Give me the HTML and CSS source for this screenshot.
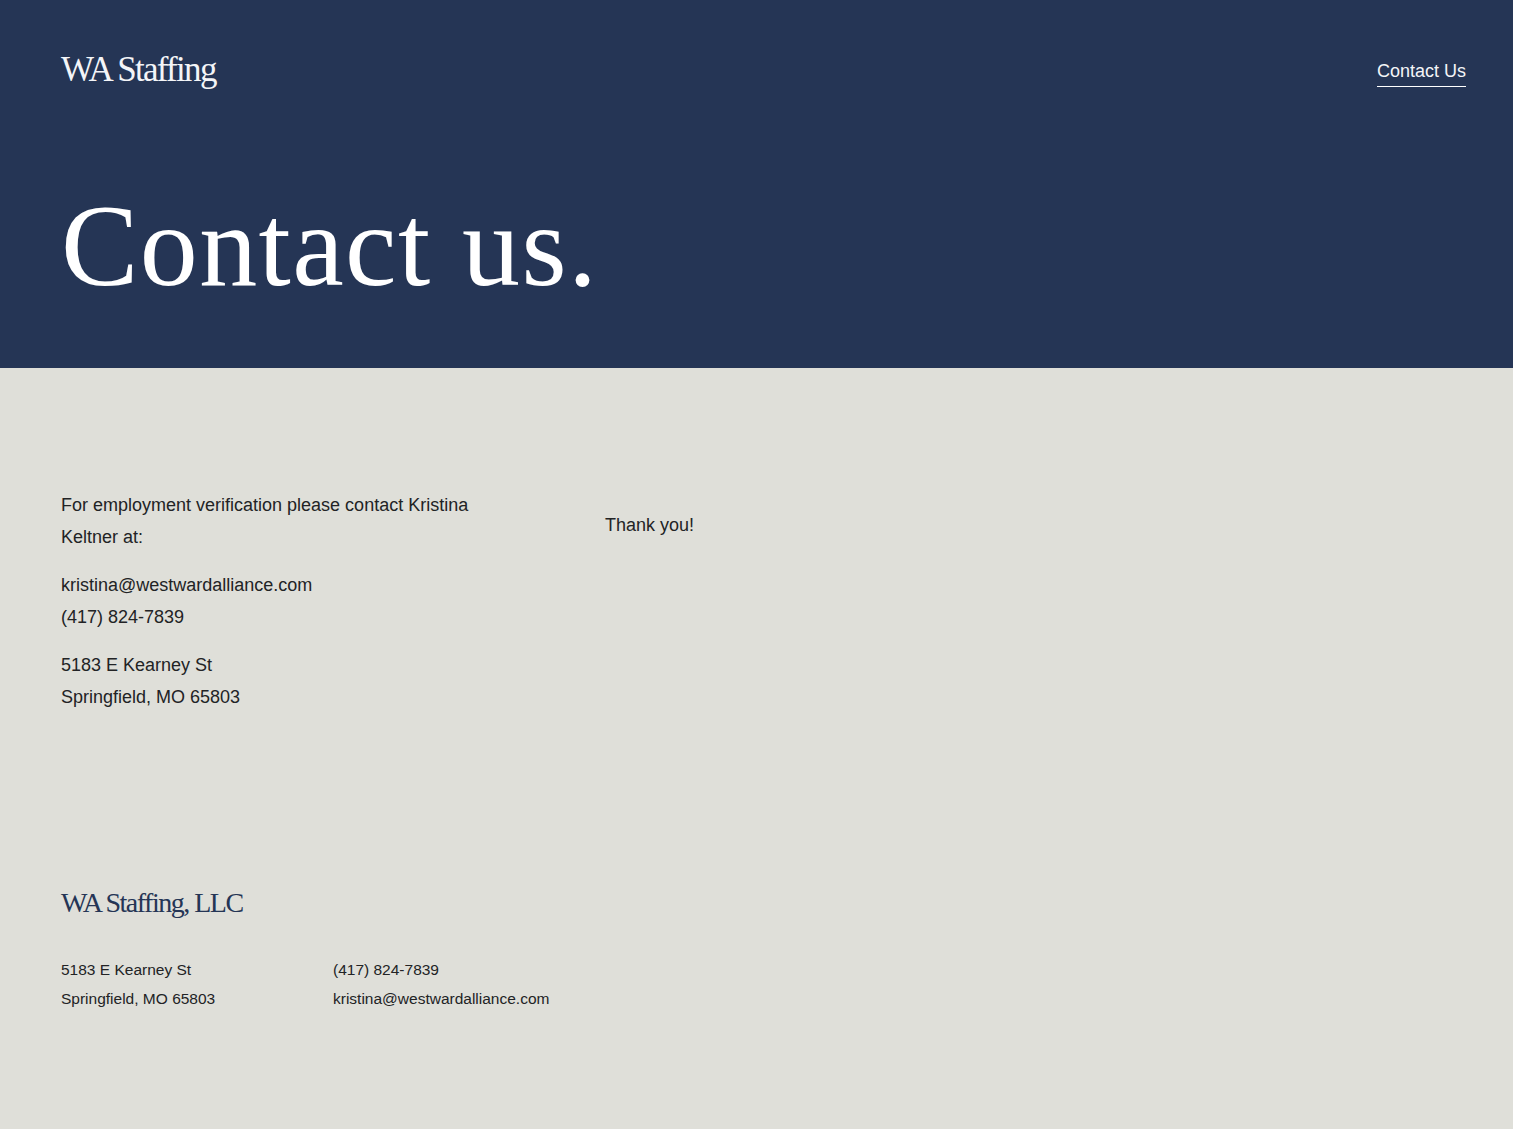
FILE: index.html
```html
<!DOCTYPE html>
<html lang="en">
<head>
<meta charset="utf-8">
<title>Contact us — WA Staffing</title>
<link rel="stylesheet" href="styles.css">
</head>
<body>
<header class="hero">
  <div class="topbar">
    <a class="logo" href="#">WA Staffing</a>
    <nav class="nav"><a class="nav-link" href="#">Contact Us</a></nav>
  </div>
  <h1 class="hero-title">Contact us.</h1>
</header>
<main class="content">
  <div class="info-col">
    <p>For employment verification please contact Kristina Keltner at:</p>
    <p>kristina@westwardalliance.com<br>(417) 824-7839</p>
    <p>5183 E Kearney St<br>Springfield, MO 65803</p>
  </div>
  <div class="thanks-col">
    <p>Thank you!</p>
  </div>
</main>
<footer class="footer">
  <div class="footer-logo">WA Staffing, LLC</div>
  <div class="footer-cols">
    <div class="footer-col">5183 E Kearney St<br>Springfield, MO 65803</div>
    <div class="footer-col">(417) 824-7839<br>kristina@westwardalliance.com</div>
  </div>
</footer>
</body>
</html>
```
FILE: styles.css
```css
html, body {
  margin: 0;
  padding: 0;
  background: #dfdfd9;
}
body {
  font-family: "Liberation Sans", Arial, sans-serif;
  color: #222325;
}
a { color: inherit; text-decoration: none; }

.hero {
  background: #253555;
  color: #ffffff;
  height: 368px;
  box-sizing: border-box;
  padding: 48px 47px 0 61px;
}
.topbar {
  display: flex;
  justify-content: space-between;
  align-items: center;
}
.logo {
  font-family: "Liberation Serif", "Times New Roman", serif;
  font-size: 35px;
  letter-spacing: -1.7px;
  line-height: 44px;
  color: #f4f5f8;
}
.nav-link {
  font-size: 18px;
  line-height: 24px;
  color: #f4f5f8;
  border-bottom: 1.5px solid #ffffff;
  padding-bottom: 5px;
  position: relative;
  top: 1px;
}
.hero-title {
  margin: 96px 0 0;
  font-family: "Liberation Serif", "Times New Roman", serif;
  font-weight: normal;
  font-size: 116px;
  line-height: 1;
  letter-spacing: 1.4px;
  color: #ffffff;
}

.content {
  display: grid;
  grid-template-columns: 544px 1fr;
  padding: 121px 47px 0 61px;
  font-size: 18px;
  line-height: 32px;
}
.content p { margin: 0 0 16px; }
.info-col { max-width: 430px; }
.thanks-col { padding-top: 20px; }

.footer {
  padding: 157px 47px 120px 61px;
}
.footer-logo {
  font-family: "Liberation Serif", "Times New Roman", serif;
  font-size: 28px;
  line-height: 34px;
  letter-spacing: -1.5px;
  color: #253555;
}
.footer-cols {
  display: grid;
  grid-template-columns: 272px 1fr;
  margin-top: 35px;
  font-size: 15.5px;
  line-height: 29px;
}
```
